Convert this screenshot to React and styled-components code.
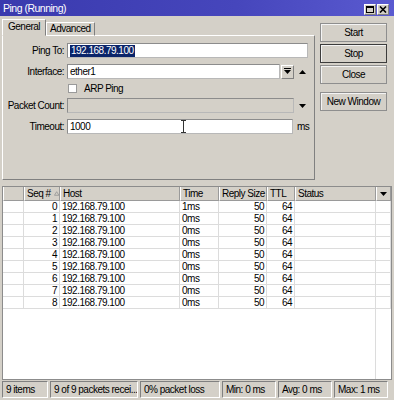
import React from 'react';
import styled, { createGlobalStyle, css } from 'styled-components';

const Global = createGlobalStyle`
  html, body { margin: 0; padding: 0; background: #d4d0c8; }
  body {
    font-family: "Liberation Sans", Arial, sans-serif;
    font-size: 10px;
    letter-spacing: -0.5px;
    color: #000;
  }
  * { box-sizing: border-box; }
`;

const raised = css`
  border-top: 1px solid #ffffff;
  border-left: 1px solid #ffffff;
  border-right: 1px solid #808080;
  border-bottom: 1px solid #808080;
`;

const sunken = css`
  border-top: 1px solid #808080;
  border-left: 1px solid #808080;
  border-right: 1px solid #ffffff;
  border-bottom: 1px solid #ffffff;
`;

const Window = styled.div`
  width: 394px;
  height: 400px;
  background: #d4d0c8;
  display: flex;
  flex-direction: column;
  overflow: hidden;
`;

const TitleBar = styled.div`
  height: 16px;
  flex: none;
  display: flex;
  align-items: center;
  justify-content: space-between;
  padding: 0 5px 0 3px;
  background: linear-gradient(90deg, #3a3aae 0%, #4646bc 60%, #5a5ad0 100%);
  color: #fff;
  font-size: 10.5px;
`;

const TitleButtons = styled.div`
  display: flex;
  gap: 1px;
  padding-top: 3px;
`;

const TitleButton = styled.div`
  width: 12px;
  height: 11px;
  background: #d4d0c8;
  ${raised};
  display: flex;
  align-items: center;
  justify-content: center;
`;

const Top = styled.div`
  height: 170px;
  flex: none;
  display: flex;
`;

const LeftPane = styled.div`
  margin-left: 2px;
  width: 313px;
  padding-top: 3px;
  display: flex;
  flex-direction: column;
`;

const TabStrip = styled.div`
  height: 17px;
  display: flex;
  align-items: flex-end;
  position: relative;
  z-index: 1;
  margin-bottom: -1px;
`;

const Tab = styled.div`
  height: ${p => (p.$active ? 17 : 14)}px;
  padding: 0 ${p => (p.$active ? 5 : 3)}px;
  display: flex;
  align-items: center;
  background: #d4d0c8;
  border-top: 1px solid #ffffff;
  border-left: 1px solid #ffffff;
  border-right: 1px solid #808080;
  border-bottom: ${p => (p.$active ? '1px solid #d4d0c8' : '1px solid #ffffff')};
  padding-bottom: ${p => (p.$active ? 2 : 1)}px;
`;

const Panel = styled.div`
  height: 145px;
  ${raised};
  padding-top: 7px;
  display: flex;
  flex-direction: column;
`;

const FormRow = styled.div`
  display: flex;
  align-items: center;
  height: ${p => p.$h || 15}px;
  margin-top: ${p => p.$mt || 0}px;
`;

const Label = styled.div`
  width: 61px;
  margin-right: 3px;
  text-align: right;
  white-space: nowrap;
`;

const Input = styled.div`
  position: relative;
  width: ${p => p.$w}px;
  height: 15px;
  background: ${p => (p.$disabled ? '#d4d0c8' : '#ffffff')};
  border: 1px solid #8c8c8c;
  border-bottom-color: #b8b8b8;
  border-right-color: #b8b8b8;
  display: flex;
  align-items: center;
  padding-left: 2px;
  white-space: nowrap;
`;

const Selected = styled.span`
  background: #0a246a;
  color: #fff;
  padding: 0 1px;
  line-height: 12px;
`;

const DropButton = styled.div`
  width: 13px;
  height: 14px;
  margin-left: 1px;
  background: #d4d0c8;
  ${raised};
  display: flex;
  align-items: center;
  justify-content: center;
`;

const Arrow = styled.div`
  width: 8px;
  margin-left: ${p => p.$ml || 4}px;
  display: flex;
  align-items: center;
  justify-content: center;
`;

const Unit = styled.div`
  margin-left: 4px;
  color: #000;
`;

const Check = styled.div`
  width: 9px;
  height: 9px;
  background: #fff;
  border: 1px solid #9a9a9a;
  margin-left: 1px;
`;

const CheckLabel = styled.div`
  margin-left: 7px;
`;

const Cursor = styled.svg`
  position: absolute;
  left: 113px;
  top: 0px;
`;

const RightPane = styled.div`
  margin-left: 5px;
  width: 67px;
  padding-top: 7px;
  display: flex;
  flex-direction: column;
  gap: 2px;
`;

const Button = styled.div`
  height: 19px;
  display: flex;
  align-items: center;
  justify-content: center;
  background: #d4d0c8;
  border: 1px solid ${p => (p.$default ? '#3c3c3c' : '#8e8e8e')};
  box-shadow: inset 1px 1px 0 #f4f4f4;
  margin-top: ${p => p.$mt || 0}px;
`;

const Table = styled.div`
  flex: none;
  height: 194px;
  margin: 0 2px;
  background: #fff;
  border: 1px solid #8c8c8c;
  display: flex;
  flex-direction: column;
`;

const cols = '21px 36px 120px 39px 48px 28px 81px 1fr';

const HeaderRow = styled.div`
  display: grid;
  grid-template-columns: ${cols};
  height: 14px;
  flex: none;
`;

const HeaderCell = styled.div`
  background: #d4d0c8;
  border-left: 1px solid #ffffff;
  border-right: 1px solid #9a9a9a;
  border-bottom: 1px solid #9a9a9a;
  display: flex;
  align-items: center;
  justify-content: ${p => (p.$center ? 'center' : 'flex-start')};
  padding-left: ${p => (p.$center ? 0 : 2)}px;
  white-space: nowrap;
  overflow: hidden;
  line-height: 12px;
`;

const DataRow = styled.div`
  display: grid;
  grid-template-columns: ${cols};
  height: 12px;
  flex: none;
`;

const Cell = styled.div`
  border-right: 1px solid #dcdcdc;
  border-bottom: 1px solid #dcdcdc;
  text-align: ${p => (p.$right ? 'right' : 'left')};
  padding: 0 2px;
  line-height: 11px;
  white-space: nowrap;
  overflow: hidden;
`;

const Filler = styled.div`
  flex: 1;
  display: grid;
  grid-template-columns: 373px 1fr;
`;

const FillerCol = styled.div`
  border-right: ${p => (p.$line ? '1px solid #dcdcdc' : 'none')};
`;

const StatusBar = styled.div`
  flex: none;
  height: 18px;
  display: flex;
  gap: 2px;
  padding: 1px 2px 0 2px;
`;

const StatusCell = styled.div`
  width: ${p => p.$w}px;
  height: 17px;
  ${sunken};
  display: flex;
  align-items: center;
  padding-left: 3px;
  white-space: nowrap;
  overflow: hidden;
`;

const DownBarIcon = () => (
  <svg width="7" height="7" viewBox="0 0 7 7">
    <rect x="0" y="0" width="7" height="1" fill="#000" />
    <polygon points="0,2 7,2 3.5,6" fill="#000" />
  </svg>
);

const Tri = ({ up, color = '#000', w = 7, h = 4 }) => (
  <svg width={w} height={h} viewBox={`0 0 ${w} ${h}`}>
    <polygon points={up ? `0,${h} ${w},${h} ${w / 2},0` : `0,0 ${w},0 ${w / 2},${h}`} fill={color} />
  </svg>
);

const SortIcon = styled.svg`
  margin-left: 3px;
`;

const rows = [
  ['0', '1ms'], ['1', '0ms'], ['2', '0ms'], ['3', '0ms'], ['4', '0ms'],
  ['5', '0ms'], ['6', '0ms'], ['7', '0ms'], ['8', '0ms'],
];

export default function App() {
  return (
    <>
      <Global />
      <Window>
        <TitleBar>
          <span>Ping (Running)</span>
          <TitleButtons>
            <TitleButton>
              <svg width="8" height="7" viewBox="0 0 8 7">
                <rect x="0.5" y="0.5" width="7" height="6" fill="none" stroke="#000" />
                <rect x="0" y="0" width="8" height="2" fill="#000" />
              </svg>
            </TitleButton>
            <TitleButton>
              <svg width="8" height="7" viewBox="0 0 8 7">
                <path d="M1 0.5 L7 6.5 M7 0.5 L1 6.5" stroke="#000" strokeWidth="1.6" />
              </svg>
            </TitleButton>
          </TitleButtons>
        </TitleBar>
        <Top>
          <LeftPane>
            <TabStrip>
              <Tab $active>General</Tab>
              <Tab>Advanced</Tab>
            </TabStrip>
            <Panel>
              <FormRow>
                <Label>Ping To:</Label>
                <Input $w={241}><Selected>192.168.79.100</Selected></Input>
              </FormRow>
              <FormRow $mt={6}>
                <Label>Interface:</Label>
                <Input $w={213}>ether1</Input>
                <DropButton><DownBarIcon /></DropButton>
                <Arrow><Tri up /></Arrow>
              </FormRow>
              <FormRow $mt={3} $h={12}>
                <Label />
                <Check />
                <CheckLabel>ARP Ping</CheckLabel>
              </FormRow>
              <FormRow $mt={4}>
                <Label>Packet Count:</Label>
                <Input $w={227} $disabled />
                <Arrow><Tri /></Arrow>
              </FormRow>
              <FormRow $mt={6}>
                <Label>Timeout:</Label>
                <Input $w={226}>
                  1000
                  <Cursor width="5" height="13" viewBox="0 0 5 13">
                    <path d="M0 0.5 H5 M2.5 0.5 V12.5 M0 12.5 H5" stroke="#333" strokeWidth="1" fill="none" />
                  </Cursor>
                </Input>
                <Unit>ms</Unit>
              </FormRow>
            </Panel>
          </LeftPane>
          <RightPane>
            <Button>Start</Button>
            <Button $default>Stop</Button>
            <Button>Close</Button>
            <Button $mt={6}>New Window</Button>
          </RightPane>
        </Top>
        <Table>
          <HeaderRow>
            <HeaderCell />
            <HeaderCell>
              Seq #
              <SortIcon width="6" height="5" viewBox="0 0 6 5">
                <polygon points="0.5,4.5 5.5,4.5 3,0.5" fill="none" stroke="#9a9a9a" />
              </SortIcon>
            </HeaderCell>
            <HeaderCell>Host</HeaderCell>
            <HeaderCell>Time</HeaderCell>
            <HeaderCell>Reply Size</HeaderCell>
            <HeaderCell>TTL</HeaderCell>
            <HeaderCell>Status</HeaderCell>
            <HeaderCell $center><Tri /></HeaderCell>
          </HeaderRow>
          {rows.map(([seq, time]) => (
            <DataRow key={seq}>
              <Cell />
              <Cell $right>{seq}</Cell>
              <Cell>192.168.79.100</Cell>
              <Cell>{time}</Cell>
              <Cell $right>50</Cell>
              <Cell $right>64</Cell>
              <Cell />
              <Cell />
            </DataRow>
          ))}
          <Filler>
            <FillerCol $line />
            <FillerCol />
          </Filler>
        </Table>
        <StatusBar>
          <StatusCell $w={46}>9 items</StatusCell>
          <StatusCell $w={88}>9 of 9 packets recei...</StatusCell>
          <StatusCell $w={80}>0% packet loss</StatusCell>
          <StatusCell $w={54}>Min: 0 ms</StatusCell>
          <StatusCell $w={54}>Avg: 0 ms</StatusCell>
          <StatusCell $w={54}>Max: 1 ms</StatusCell>
        </StatusBar>
      </Window>
    </>
  );
}
